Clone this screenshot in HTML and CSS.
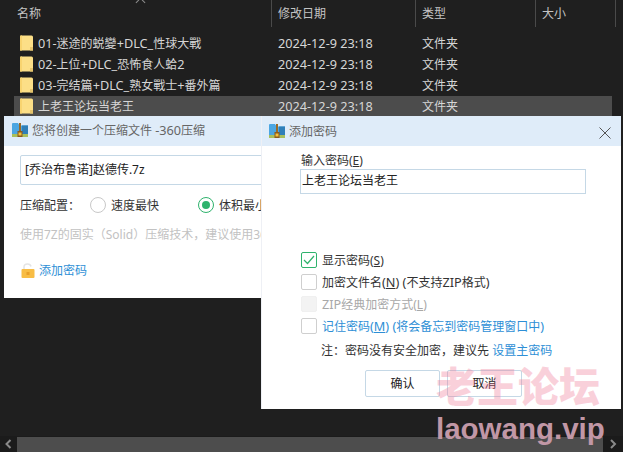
FILE: index.html
```html
<!DOCTYPE html>
<html lang="zh-CN">
<head>
    <meta charset="UTF-8">
    <title>添加密码</title>
    <link rel="stylesheet" href="styles.css">
</head>
<body>
    <svg class="defs" width="0" height="0">
        <symbol id="folder" viewBox="0 0 13 16">
            <path d="M0 1.5Q0 .5 1 .5H11.5Q13 .5 13 2V15.5H0Z" fill="#fcdf87"/>
            <path d="M10 15.5V12H13V15.5Z" fill="#e6c56c"/>
            <path d="M0 1.5Q0 .5 1 .5H2V15.5H0Z" fill="#f8d470"/>
        </symbol>
        <symbol id="zip" viewBox="0 0 16 14">
            <path d="M0 1Q0 0 1 0H6L7.5 2.5H16V11H0Z" fill="#4ba6e2"/>
            <path d="M10 2.5H16V11H10Z" fill="#2f7fb8"/>
            <path d="M0 11H16V14H0Z" fill="#a8bf5c"/>
            <path d="M7 0H9V9H7Z" fill="#9a6a28"/>
            <path d="M5.5 8H10.5V14H5.5Z" fill="#8a5a1e"/>
            <path d="M6.5 9.5H9.5V12.5H6.5Z" fill="#f2c13c"/>
        </symbol>
    </svg>

    <div class="explorer">
        <div class="header">
            <span class="sort-arrow"></span>
            <div class="col col-name">名称</div>
            <div class="col col-date">修改日期</div>
            <div class="col col-type">类型</div>
            <div class="col col-size">大小</div>
        </div>
        <div class="rows">
            <div class="row">
                <div class="col-name cell"><svg class="folder"><use href="#folder"/></svg><span><span class="lat">01-</span>迷途的蜕變<span class="lat">+DLC_</span>性球大戰</span></div>
                <div class="col-date cell lat">2024-12-9 23:18</div>
                <div class="col-type cell">文件夹</div>
            </div>
            <div class="row">
                <div class="col-name cell"><svg class="folder"><use href="#folder"/></svg><span><span class="lat">02-</span>上位<span class="lat">+DLC_</span>恐怖食人蛤<span class="lat">2</span></span></div>
                <div class="col-date cell lat">2024-12-9 23:18</div>
                <div class="col-type cell">文件夹</div>
            </div>
            <div class="row">
                <div class="col-name cell"><svg class="folder"><use href="#folder"/></svg><span><span class="lat">03-</span>完结篇<span class="lat">+DLC_</span>熟女戰士<span class="lat">+</span>番外篇</span></div>
                <div class="col-date cell lat">2024-12-9 23:18</div>
                <div class="col-type cell">文件夹</div>
            </div>
            <div class="row selected">
                <div class="col-name cell"><svg class="folder"><use href="#folder"/></svg>上老王论坛当老王</div>
                <div class="col-date cell lat">2024-12-9 23:18</div>
                <div class="col-type cell">文件夹</div>
            </div>
        </div>
        <div class="scrollbar">
            <svg class="arrow" viewBox="0 0 8 10"><path d="M6 1L2 5L6 9" fill="none" stroke="#8a8a8a" stroke-width="2"/></svg>
            <div class="thumb"></div>
            <svg class="arrow arrow-right" viewBox="0 0 8 10"><path d="M2 1L6 5L2 9" fill="none" stroke="#8a8a8a" stroke-width="2"/></svg>
        </div>
    </div>

    <!-- 压缩窗口 -->
    <div class="window compress">
        <div class="titlebar">
            <svg class="zip-icon"><use href="#zip"/></svg>
            <span>您将创建一个压缩文件 <span class="lat">-360</span>压缩</span>
        </div>
        <div class="compress-body">
            <div class="file-input">[乔治布鲁诺]赵德传.7z</div>
            <div class="config">
                <span class="config-label">压缩配置：</span>
                <span class="radio"></span><span class="radio-text">速度最快</span>
                <span class="radio checked"></span><span class="radio-text">体积最小</span>
            </div>
            <div class="hint">使用7Z的固实（Solid）压缩技术，建议使用360压缩打开</div>
            <div class="add-pass">
                <svg class="lock" viewBox="0 0 14 15">
                    <path d="M3 7V4Q3 1 6.5 1Q9.5 1 10 3.5" fill="none" stroke="#e4e4e4" stroke-width="1.5"/>
                    <rect x="0.5" y="6" width="13" height="9" rx="1" fill="#f8bd45"/>
                    <rect x="5.5" y="9" width="3" height="3" fill="#e8a02a"/>
                </svg>
                <span>添加密码</span>
            </div>
        </div>
    </div>

    <!-- 添加密码窗口 -->
    <div class="window password">
        <div class="titlebar">
            <svg class="zip-icon"><use href="#zip"/></svg>
            <span>添加密码</span>
            <svg class="close" viewBox="0 0 12 12"><path d="M.5 .5L11.5 11.5M11.5 .5L.5 11.5" stroke="#555" stroke-width="1"/></svg>
        </div>
        <div class="password-body">
            <label class="pass-label">输入密码(<u>E</u>)</label>
            <div class="pass-input">上老王论坛当老王</div>
            <div class="options">
                <div class="option">
                    <span class="check checked">
                        <svg viewBox="0 0 12 10"><path d="M1 5L4.5 8.5L11 1" fill="none" stroke="#2fb36d" stroke-width="1.2"/></svg>
                    </span>
                    <span>显示密码(<u>S</u>)</span>
                </div>
                <div class="option">
                    <span class="check"></span>
                    <span>加密文件名<span class="lat">(<u>N</u>) (</span>不支持<span class="lat">ZIP</span>格式<span class="lat">)</span></span>
                </div>
                <div class="option disabled">
                    <span class="check"></span>
                    <span><span class="lat">ZIP</span>经典加密方式(<u>L</u>)</span>
                </div>
                <div class="option link">
                    <span class="check"></span>
                    <span>记住密码<span class="lat">(<u>M</u>) (</span>将会备忘到密码管理窗口中<span class="lat">)</span></span>
                </div>
            </div>
            <div class="note">注：密码没有安全加密，建议先 <span class="note-link">设置主密码</span></div>
            <div class="buttons">
                <div class="btn">确认</div>
                <div class="btn">取消</div>
            </div>
        </div>
    </div>

    <!-- 水印 -->
    <div class="watermark">
        <div class="wm-cn">老王论坛</div>
        <div class="wm-en">laowang.vip</div>
    </div>
</body>
</html>
```

FILE: styles.css
```css
* {
    margin: 0;
    padding: 0;
    box-sizing: border-box;
}

body {
    width: 623px;
    height: 452px;
    overflow: hidden;
    position: relative;
    background: #1f1f1f;
    font-family: "Noto Sans", "Noto Sans CJK SC", sans-serif;
    font-size: 12px;
}

/* latin runs sit wider than the CJK around them */
.lat {
    font-size: 12.7px;
}

.defs {
    display: block;
    height: 0;
}

.explorer {
    height: 452px;
    display: flex;
    flex-direction: column;
    color: #d6d6d6;
}

.header {
    height: 27px;
    display: flex;
    position: relative;
    flex-shrink: 0;
}

.sort-arrow {
    position: absolute;
    left: 137px;
    top: 0;
    width: 7px;
    height: 7px;
    border-left: 1px solid #8f8f8f;
    border-top: 1px solid #8f8f8f;
    transform: translateY(-1px) rotate(45deg);
}

.col {
    line-height: 27px;
    border-right: 1px solid #4a4a4a;
    color: #c4c4c4;
}

.col-name {
    width: 272px;
    padding-left: 17px;
    flex-shrink: 0;
}

.col-date {
    width: 144px;
    padding-left: 6px;
    flex-shrink: 0;
}

.col-type {
    width: 120px;
    padding-left: 6px;
    flex-shrink: 0;
}

.col-size {
    width: 80px;
    padding-left: 6px;
    flex-shrink: 0;
}

.rows {
    padding-top: 6px;
    flex: 1;
}

.row {
    height: 21px;
    display: flex;
    align-items: center;
    width: 612px;
    padding-bottom: 1px;
}

.row.selected {
    background: #4c4c4c;
    margin-left: 14px;
    width: 598px;
}

.row.selected .col-name {
    width: 258px;
    padding-left: 6px;
}

.cell {
    display: flex;
    align-items: center;
    white-space: nowrap;
}

.col-name.cell {
    padding-left: 20px;
}

.folder {
    width: 13px;
    height: 16px;
    margin-right: 5px;
    flex-shrink: 0;
}

.scrollbar {
    height: 16px;
    display: flex;
    align-items: center;
    background: #1b1b1b;
    flex-shrink: 0;
}

.arrow {
    width: 17px;
    height: 10px;
    flex-shrink: 0;
}

.arrow-right {
    width: 20px;
}

.thumb {
    flex: 1;
    height: 15px;
    background: #4d4d4d;
}

.window {
    position: absolute;
    top: 116px;
    background: #fff;
    color: #333;
}

.titlebar {
    height: 30px;
    background: #dfecf9;
    display: flex;
    align-items: center;
    color: #666;
    padding-left: 8px;
}

.zip-icon {
    width: 16px;
    height: 14px;
    margin-right: 4px;
    flex-shrink: 0;
}

.compress {
    left: 4px;
    width: 257px;
    height: 182px;
    overflow: hidden;
}

.compress .titlebar {
    padding-bottom: 3px;
}

.compress-body {
    padding: 9px 0 0 16px;
}

.file-input {
    width: 260px;
    height: 30px;
    line-height: 28px;
    border: 1px solid #c5d8e6;
    border-radius: 2px;
    padding-left: 4px;
    color: #222;
}

.config {
    display: flex;
    align-items: center;
    margin-top: 5px;
    height: 30px;
    white-space: nowrap;
}

.config-label {
    width: 70px;
    flex-shrink: 0;
}

.radio {
    width: 16px;
    height: 16px;
    border: 1px solid #c8c8c8;
    border-radius: 50%;
    margin-right: 5px;
    flex-shrink: 0;
    position: relative;
}

.radio.checked {
    border-color: #2fb36d;
}

.radio.checked::after {
    content: "";
    position: absolute;
    left: 3px;
    top: 3px;
    width: 8px;
    height: 8px;
    border-radius: 50%;
    background: #2fb36d;
}

.radio-text {
    width: 87px;
    flex-shrink: 0;
}

.hint {
    color: #c2c2c2;
    margin-top: 5px;
    white-space: nowrap;
}

.add-pass {
    display: flex;
    align-items: center;
    margin-top: 18px;
    color: #2e8fd6;
}

.lock {
    width: 14px;
    height: 15px;
    margin-left: 1px;
    margin-right: 4px;
}

.password {
    left: 261px;
    width: 360px;
    height: 293px;
    border-left: 1px solid #eef0f5;
}

.password .titlebar {
    padding-left: 7px;
    position: relative;
}

.close {
    position: absolute;
    right: 10px;
    top: 11px;
    width: 12px;
    height: 12px;
}

.password-body {
    padding: 7px 0 0 38px;
}

.pass-label {
    display: block;
    line-height: 16px;
    padding-left: 1px;
}

.pass-input {
    width: 286px;
    height: 25px;
    line-height: 22px;
    border: 1px solid #c5d8e6;
    padding-left: 1px;
    color: #222;
}

.options {
    margin: 58px 0 0 1px;
    display: flex;
    flex-direction: column;
    gap: 6px;
}

.option {
    display: flex;
    align-items: center;
    height: 16px;
    gap: 5px;
    white-space: nowrap;
}

.check {
    width: 16px;
    height: 16px;
    border: 1px solid #cfcfcf;
    border-radius: 2px;
    flex-shrink: 0;
    display: flex;
    align-items: center;
    justify-content: center;
}

.check.checked {
    border-color: #2fb36d;
}

.check svg {
    width: 12px;
    height: 10px;
}

.option.disabled {
    color: #a8a8a8;
}

.option.disabled .check {
    background: #f3f3f3;
    border-color: #f0f0f0;
}

.option.link {
    color: #2e8fd6;
}

.note {
    margin: 7px 0 0 21px;
    white-space: nowrap;
}

.note-link {
    color: #2e8fd6;
}

.buttons {
    display: flex;
    margin: 11px 0 0 65px;
}

.btn {
    width: 75px;
    height: 27px;
    line-height: 25px;
    text-align: center;
    border: 1px solid #c5d8e6;
    border-radius: 2px;
    margin-right: 7px;
    color: #222;
}

.watermark {
    position: absolute;
    left: 436px;
    top: 358px;
    pointer-events: none;
    white-space: nowrap;
}

.wm-cn {
    font-family: "Noto Sans CJK SC", sans-serif;
    font-size: 41px;
    line-height: 52px;
    font-weight: 900;
    color: rgba(240, 120, 150, 0.34);
}

.wm-en {
    font-family: "Liberation Sans", sans-serif;
    font-size: 29.5px;
    line-height: 38px;
    font-weight: 700;
    color: #c197a6;
}
```
